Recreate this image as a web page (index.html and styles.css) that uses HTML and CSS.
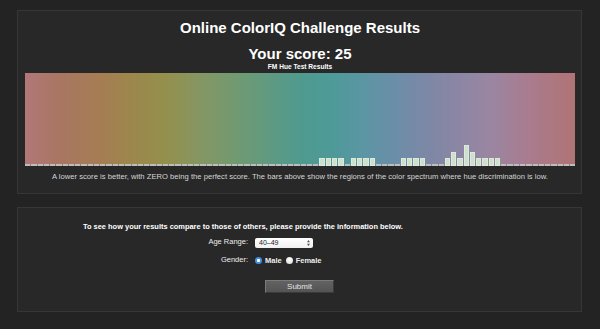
FILE: index.html
```html
<!DOCTYPE html>
<html>
<head>
<meta charset="UTF-8" />
<title>Online ColorIQ Challenge Results</title>
<link rel="stylesheet" href="styles.css">
</head>
<body>
<div class="page">

<div class="panel results">
	<h1 class="title">Online ColorIQ Challenge Results</h1>
	<div class="score">Your score: 25</div>
	<div class="test-name">FM Hue Test Results</div>
	<div class="spectrum">
		<div class="bar"></div><div class="bar"></div><div class="bar"></div><div class="bar"></div><div class="bar"></div><div class="bar"></div><div class="bar"></div><div class="bar"></div><div class="bar"></div><div class="bar"></div>
		<div class="bar"></div><div class="bar"></div><div class="bar"></div><div class="bar"></div><div class="bar"></div><div class="bar"></div><div class="bar"></div><div class="bar"></div><div class="bar"></div><div class="bar"></div>
		<div class="bar"></div><div class="bar"></div><div class="bar"></div><div class="bar"></div><div class="bar"></div><div class="bar"></div><div class="bar"></div><div class="bar"></div><div class="bar"></div><div class="bar"></div>
		<div class="bar"></div><div class="bar"></div><div class="bar"></div><div class="bar"></div><div class="bar"></div><div class="bar"></div><div class="bar"></div><div class="bar"></div><div class="bar"></div><div class="bar"></div>
		<div class="bar"></div><div class="bar"></div><div class="bar"></div><div class="bar"></div><div class="bar"></div><div class="bar"></div><div class="bar"></div>
		<div class="bar hit" style="height:8px"></div><div class="bar hit" style="height:8px"></div><div class="bar hit" style="height:8px"></div><div class="bar hit" style="height:8px"></div>
		<div class="bar"></div>
		<div class="bar hit" style="height:8px"></div><div class="bar hit" style="height:8px"></div><div class="bar hit" style="height:8px"></div><div class="bar hit" style="height:8px"></div>
		<div class="bar"></div><div class="bar"></div><div class="bar"></div><div class="bar"></div>
		<div class="bar hit" style="height:8px"></div><div class="bar hit" style="height:8px"></div><div class="bar hit" style="height:8px"></div><div class="bar hit" style="height:8px"></div>
		<div class="bar"></div><div class="bar"></div><div class="bar"></div>
		<div class="bar hit" style="height:8px"></div><div class="bar hit" style="height:14px"></div><div class="bar hit" style="height:8px"></div><div class="bar hit" style="height:21px"></div><div class="bar hit" style="height:14px"></div>
		<div class="bar hit" style="height:8px"></div><div class="bar hit" style="height:8px"></div><div class="bar hit" style="height:8px"></div><div class="bar hit" style="height:8px"></div>
		<div class="bar"></div><div class="bar"></div><div class="bar"></div><div class="bar"></div><div class="bar"></div><div class="bar"></div>
		<div class="bar"></div><div class="bar"></div><div class="bar"></div><div class="bar"></div><div class="bar"></div><div class="bar"></div>
	</div>
	<div class="note">A lower score is better, with ZERO being the perfect score. The bars above show the regions of the color spectrum where hue discrimination is low.</div>
</div>

<form class="panel compare">
	<div class="form-grid">
		<div class="intro">To see how your results compare to those of others, please provide the information below.</div>

		<label class="field-label age-label" for="age">Age Range:</label>
		<div class="select-wrap">
			<select id="age" class="select">
				<option>30&ndash;39</option>
				<option selected>40&ndash;49</option>
				<option>50&ndash;59</option>
			</select>
			<svg class="select-arrows" width="3" height="6" viewBox="0 0 3 6"><path d="M1.5 0 L3 2.2 H0 Z M1.5 6 L3 3.8 H0 Z" fill="#555"/></svg>
		</div>

		<div class="field-label gender-label">Gender:</div>
		<div class="radios">
			<label class="radio-item"><input type="radio" name="gender" class="radio" checked> Male</label>
			<label class="radio-item"><input type="radio" name="gender" class="radio"> Female</label>
		</div>
	</div>
	<input type="button" class="submit" value="Submit" />
</form>

</div>
</body>
</html>
```

FILE: styles.css
```css
body { margin: 0; background: #232323; color: #fff;
	font-family: "Liberation Sans", Arial, Helvetica, sans-serif; }

.page { width: 565px; margin: 0 0 0 17px; padding-top: 10px; display: flex; flex-direction: column; gap: 13px; }

.panel { background: #282828; border: 1px solid #363636; }

/* results panel */
.results { padding: 8px 6px 11px 7px; text-align: center; }

.title { margin: 0; font-size: 15px; line-height: 18px; font-weight: bold; }

.score { margin-top: 9px; font-size: 15px; line-height: 16px; font-weight: bold; }

.test-name { margin-top: 1px; font-size: 6.6px; line-height: 8px; font-weight: bold; }

.spectrum { margin-top: 2px; height: 93px; width: 550px; display: flex; align-items: flex-end; gap: 1px;
	background: linear-gradient(to right,
		#b07878 0%, #a87662 6.4%, #a67d54 13.6%, #9d864c 19%, #94904c 25.5%,
		#859664 32%, #6f9a72 39%, #5f9a82 44.5%, #4f9a8e 50%, #4d9a98 55.5%,
		#5a96a3 61%, #6b8ea8 67%, #7b88a6 72.7%, #8986a4 78%, #9a86a2 84.5%,
		#a87c90 91%, #b07474 100%); }

.bar { flex: 1; height: 2px; background: #bdbdbd; }
.bar.hit { background: #cde0cc; box-shadow: inset 0 0 0 1px rgba(255,255,255,0.3); }

.note { margin-top: 6px; font-size: 7.65px; line-height: 10px; color: #d4d4d4; }

/* compare form */
.compare { margin: 0; padding: 14px 0 18px; display: flex; flex-direction: column; }

.form-grid { margin-left: 65px; display: grid; grid-template-columns: 165px auto; column-gap: 7px; align-items: center; }

.intro { grid-column: 1 / -1; font-size: 7.45px; line-height: 10px; font-weight: bold; margin-bottom: 6px; }

.field-label { text-align: right; font-size: 7.5px; line-height: 10px; color: #eee; }
.age-label { align-self: start; margin-top: -1px; }
.gender-label { margin-top: 7px; }

.select-wrap { position: relative; width: 58px; height: 10px; }
.select { appearance: none; -webkit-appearance: none; display: block; width: 58px; height: 10px; margin: 0; padding: 0 0 0 4px;
	border: 0; border-radius: 2px; background: linear-gradient(#fff, #f0f0f0); color: #222;
	font-family: "Liberation Sans", Arial, sans-serif; font-size: 7px; line-height: 10px; }
.select-arrows { position: absolute; right: 3px; top: 2px; }

.radios { margin-top: 7px; display: flex; align-items: center; gap: 4px; height: 10px; }
.radio-item { display: flex; align-items: center; gap: 2px; font-size: 7.5px; font-weight: bold; color: #eee; }
.radio { appearance: none; -webkit-appearance: none; width: 7px; height: 7px; margin: 0 1px 0 0; border-radius: 50%;
	background: radial-gradient(circle at 50% 35%, #fff, #d8d8d8); }
.radio:checked { background: radial-gradient(circle, #fff 0 1.3px, #3f8fe4 1.8px); }

.submit { align-self: center; margin-top: 15px; width: 69px; height: 13px; padding: 0;
	background: linear-gradient(#626262, #545454); color: #e4e4e4;
	border: 1px solid #7a7a7a; border-right-color: #3a3a3a; border-bottom-color: #3a3a3a;
	font-family: "Liberation Sans", Arial, sans-serif; font-size: 8px; line-height: 11px; }
```
